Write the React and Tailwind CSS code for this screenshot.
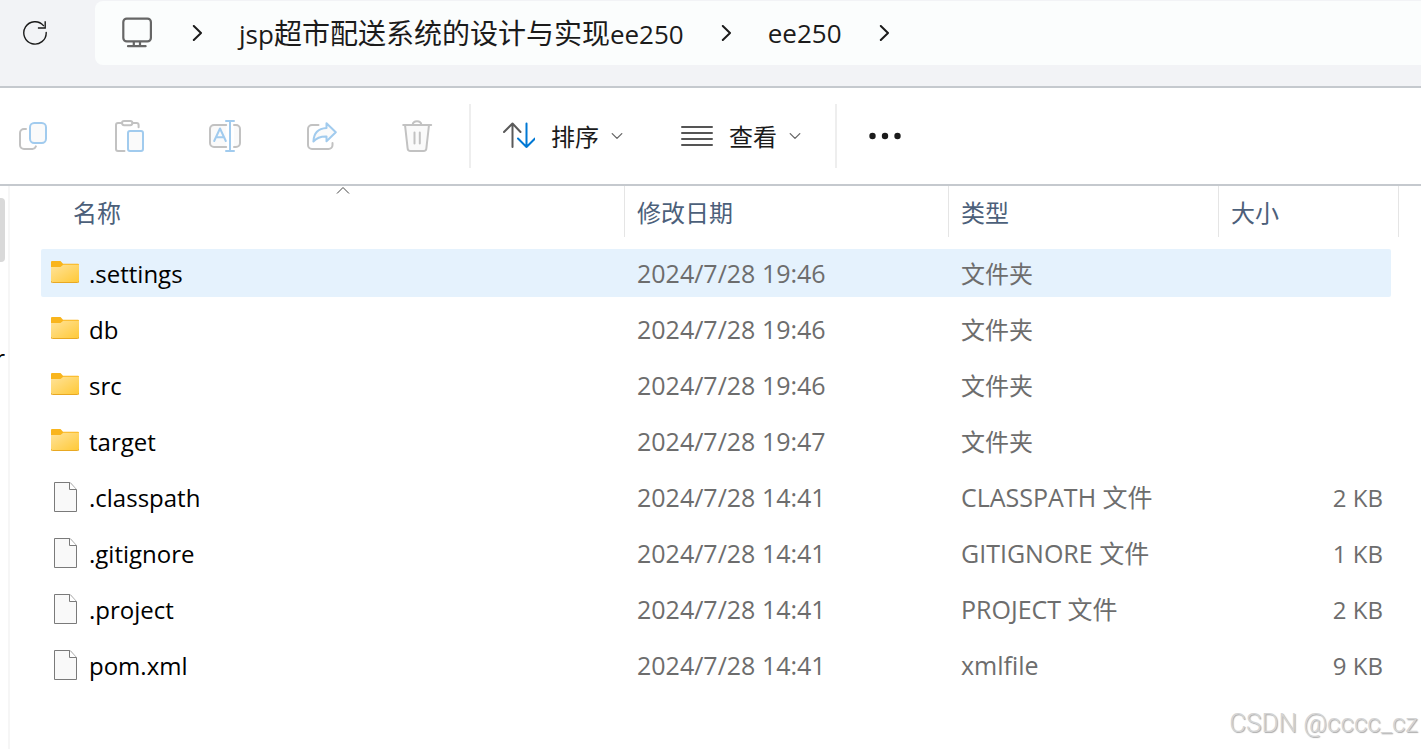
import { useState } from 'react';
import clsx from 'clsx';

const files = [
  { name: '.settings', date: '2024/7/28 19:46', type: '文件夹', folder: true },
  { name: 'db', date: '2024/7/28 19:46', type: '文件夹', folder: true },
  { name: 'src', date: '2024/7/28 19:46', type: '文件夹', folder: true },
  { name: 'target', date: '2024/7/28 19:47', type: '文件夹', folder: true },
  { name: '.classpath', date: '2024/7/28 14:41', type: 'CLASSPATH 文件', size: '2 KB' },
  { name: '.gitignore', date: '2024/7/28 14:41', type: 'GITIGNORE 文件', size: '1 KB' },
  { name: '.project', date: '2024/7/28 14:41', type: 'PROJECT 文件', size: '2 KB' },
  { name: 'pom.xml', date: '2024/7/28 14:41', type: 'xmlfile', size: '9 KB' },
];

const columns = 'grid grid-cols-[584px_324px_270px_1fr]';

function Icon({ size = 32, width = 2, children, className }) {
  return (
    <svg
      width={size}
      height={size}
      viewBox={`0 0 ${size} ${size}`}
      fill="none"
      strokeWidth={width}
      strokeLinecap="round"
      strokeLinejoin="round"
      className={clsx('block shrink-0', className)}
      aria-hidden="true"
    >
      {children}
    </svg>
  );
}

function RefreshIcon() {
  return (
    <Icon size={24} width={1.4} className="stroke-[#1b1b1b]">
      <path d="M20.500 4.600A11.200 11.200 0 1 0 23.200 11.500" />
      <path d="M22.200 1v6h-6.600" strokeLinecap="square" strokeLinejoin="miter" />
    </Icon>
  );
}

function MonitorIcon() {
  return (
    <Icon width={2.2} className="mr-0.5 stroke-[#666]">
      <rect x="2.300" y="1.600" width="27.600" height="22.800" rx="3.500" />
      <path d="M7 29.200h17.600M12.800 25v4M19 25v4" />
    </Icon>
  );
}

function PathChevron() {
  return (
    <Icon size={16} className="stroke-[#1b1b1b]">
      <path d="M4.800 1l7.200 7-7.200 7" />
    </Icon>
  );
}

function DownChevron() {
  return (
    <Icon size={12} width={1.3} className="stroke-[#666]">
      <path d="M1.200 3.600L6 8.400l4.800-4.800" />
    </Icon>
  );
}

function CopyIcon() {
  return (
    <Icon>
      <path d="M9 9H7a4 4 0 0 0-4 4v12a4 4 0 0 0 4 4h8.500a4 4 0 0 0 3.400-2.600" stroke="#c2c2c2" />
      <rect x="13" y="3" width="16" height="20" rx="4.200" stroke="#a1cbee" fill="#fafafa" />
    </Icon>
  );
}

function PasteIcon() {
  return (
    <Icon>
      <path d="M8.600 3H5a2 2 0 0 0-2 2v24a2 2 0 0 0 2 2h6.500" stroke="#c2c2c2" />
      <path d="M19.500 3h4.100a2 2 0 0 1 2 2v2.200" stroke="#c2c2c2" />
      <rect x="9" y="1" width="10.400" height="4.200" rx="2.100" stroke="#c2c2c2" />
      <rect x="15" y="11" width="15" height="20" rx="2" stroke="#a1cbee" fill="#fafafa" />
    </Icon>
  );
}

function RenameIcon() {
  return (
    <Icon>
      <path d="M17.200 5H5a4 4 0 0 0-4 4v14a4 4 0 0 0 4 4h12.200" stroke="#c2c2c2" fill="#fafafa" />
      <path d="M25 5h2a4 4 0 0 1 4 4v14a4 4 0 0 1-4 4h-2" stroke="#c2c2c2" fill="#fafafa" />
      <path d="M5.200 21L11 8.500 16.800 21M7.200 17.200h7.600" stroke="#a1cbee" />
      <path d="M17 1h8M21 1v30M17 31h8" stroke="#a1cbee" />
    </Icon>
  );
}

function ShareIcon() {
  return (
    <Icon>
      <path d="M13.500 5H7a4 4 0 0 0-4 4v16a4 4 0 0 0 4 4h16.500a4 4 0 0 0 4-4v-2" stroke="#c2c2c2" />
      <path
        d="M21.500 3.200l9.300 9-9.300 9V16.500C15.500 16.300 11.500 18 8.400 21.500c.3-7.500 4.500-13 13.100-13.500z"
        stroke="#a1cbee"
        fill="#fafafa"
      />
    </Icon>
  );
}

function TrashIcon() {
  return (
    <Icon className="stroke-[#c2c2c2]">
      <path d="M4 5l2.600 23.200a3 3 0 0 0 3 2.800h12.800a3 3 0 0 0 3-2.800L28 5z" fill="#fafafa" />
      <path d="M2.200 5h28M11.600 5c.5-5 8.300-5 8.800 0M13.500 12.500v11M18.800 12.500v11" />
    </Icon>
  );
}

function SortIcon() {
  return (
    <Icon>
      <path d="M9.500 27V3.500M1 12l8.500-8.500L17.500 12" stroke="#5a5a5a" />
      <path d="M23.500 3.500V27M15 18.500l8.500 8.500 8.500-8.500" stroke="#0078d4" />
    </Icon>
  );
}

function ListIcon() {
  return (
    <Icon className="stroke-[#555]">
      <path d="M1 7h30M1 13h30M1 19h30M1 25h30" />
    </Icon>
  );
}

function MoreIcon() {
  return (
    <Icon className="fill-[#1b1b1b]">
      <circle cx="3.500" cy="16" r="3.200" />
      <circle cx="16" cy="16" r="3.200" />
      <circle cx="28.500" cy="16" r="3.200" />
    </Icon>
  );
}

function FolderIcon() {
  return (
    <svg width="28" height="24" viewBox="0 1 28 24" className="block shrink-0" aria-hidden="true">
      <defs>
        <linearGradient id="folder" x1="0" y1="0" x2="1" y2="1">
          <stop offset="0" stopColor="#ffe39a" />
          <stop offset="1" stopColor="#ffc937" />
        </linearGradient>
      </defs>
      <path d="M0 2a1 1 0 0 1 1-1h8.500l2.500 2.800h15a1 1 0 0 1 1 1V22H0z" fill="#f9b51c" />
      <path d="M0 7h9.500l2.800-2.200H28V21.200a1 1 0 0 1-1 1H1a1 1 0 0 1-1-1z" fill="url(#folder)" />
      <path d="M0 21.200a1.300 1.300 0 0 0 1.300 1.300h25.400a1.300 1.300 0 0 0 1.300-1.300" stroke="#e8a822" fill="none" />
    </svg>
  );
}

function FileIcon() {
  return (
    <svg width="28" height="32" viewBox="0 0 28 32" className="block shrink-0" aria-hidden="true">
      <path d="M3.500 1.500H19l6.500 7v22h-22z" fill="#f9f9f9" stroke="#7a7a7a" />
      <path d="M18.500 1.500v7h7" fill="#fff" stroke="#7a7a7a" />
    </svg>
  );
}

function AddressBar() {
  return (
    <header className="flex border-b-2 border-[#c5c9ce] bg-[#f2f3f6] pt-px pb-[21px]">
      <div className="flex w-[95px] shrink-0 items-center pl-[23px]">
        <button type="button" aria-label="刷新">
          <RefreshIcon />
        </button>
      </div>
      <nav className="flex h-16 flex-1 items-center gap-[34px] rounded-l-lg bg-[#fbfdfd] pl-[26px] text-[26px] text-[#1b1b1b]">
        <MonitorIcon />
        <PathChevron />
        <a href="#parent" className="whitespace-nowrap">
          jsp<span className="text-[28px]">超市配送系统的设计与实现</span>ee250
        </a>
        <PathChevron />
        <a href="#current">ee250</a>
        <PathChevron />
      </nav>
    </header>
  );
}

function Divider({ className }) {
  return <div className={clsx('h-16 w-0.5 shrink-0 bg-[#eee]', className)} />;
}

function Toolbar() {
  return (
    <div className="flex h-[98px] items-center border-b-2 border-[#c5c9ce] pl-[17px] text-2xl text-[#1b1b1b]">
      <div className="flex gap-16">
        <button type="button" aria-label="复制"><CopyIcon /></button>
        <button type="button" aria-label="粘贴"><PasteIcon /></button>
        <button type="button" aria-label="重命名"><RenameIcon /></button>
        <button type="button" aria-label="共享"><ShareIcon /></button>
        <button type="button" aria-label="删除"><TrashIcon /></button>
      </div>
      <Divider className="mr-8 ml-9" />
      <button type="button" className="flex items-center whitespace-nowrap">
        <SortIcon />
        <span className="mr-3 ml-4 pt-0.5">排序</span>
        <DownChevron />
      </button>
      <button type="button" className="ml-[58px] flex items-center whitespace-nowrap">
        <ListIcon />
        <span className="mr-3 ml-4 pt-0.5">查看</span>
        <DownChevron />
      </button>
      <Divider className="mr-8 ml-[34px]" />
      <button type="button" aria-label="更多"><MoreIcon /></button>
    </div>
  );
}

// The navigation pane is almost fully scrolled out, only its edge is left
function SidePane() {
  return (
    <aside className="w-[10px] shrink-0 border-r-2 border-[#f6f6f6] pt-3">
      <div className="h-16 w-[5px] rounded-r-sm bg-[#d9d9d9]" />
      <div className="mt-20 flex w-[5px] justify-end overflow-hidden text-2xl">r</div>
    </aside>
  );
}

function FileTable() {
  const [selected, setSelected] = useState('.settings');

  return (
    <table className="mr-[22px] ml-[31px] block flex-1 text-2xl text-[#6d6d6d]">
      <thead className="block text-[#4c607a]">
        <tr className={columns}>
          <th className="relative flex h-[51px] items-center border-r border-[#e5e5e5] pt-0.5 pl-8 font-normal">
            名称
            <svg
              width="14"
              height="8"
              viewBox="0 0 14 8"
              className="absolute top-0 right-0 left-5 mx-auto fill-none stroke-[#444]"
              aria-hidden="true"
            >
              <path d="M1 7.500l6-6 6 6" />
            </svg>
          </th>
          <th className="flex items-center border-r border-[#e5e5e5] pt-0.5 pl-3 font-normal">修改日期</th>
          <th className="flex items-center border-r border-[#e5e5e5] pt-0.5 pl-3 font-normal">类型</th>
          <th className="flex items-center border-r border-[#e5e5e5] pt-0.5 pl-3 font-normal">大小</th>
        </tr>
      </thead>
      <tbody className="mt-3 mr-2 flex flex-col gap-2">
        {files.map((file) => (
          <tr
            key={file.name}
            onClick={() => setSelected(file.name)}
            className={clsx(columns, 'h-12 items-center rounded-xs', file.name === selected && 'bg-[#e5f2fd]')}
          >
            <td className="flex items-center gap-[10px] pl-[10px] text-black">
              {file.folder ? <FolderIcon /> : <FileIcon />}
              <span className="pt-0.5">{file.name}</span>
            </td>
            <td className="pt-0.5 pl-3 text-[25px]">{file.date}</td>
            <td className={clsx('pt-0.5 pl-3', !file.folder && 'text-[25px]')}>{file.type}</td>
            <td className="pt-0.5 pr-2 text-right">{file.size}</td>
          </tr>
        ))}
      </tbody>
    </table>
  );
}

export default function App() {
  return (
    <div className="relative flex min-h-screen flex-col overflow-hidden bg-white font-['Open_Sans','Noto_Sans_CJK_SC',sans-serif]">
      <AddressBar />
      <Toolbar />
      <main className="flex flex-1">
        <SidePane />
        <FileTable />
      </main>
      <div className="absolute right-[3px] bottom-[6px] font-['Roboto',sans-serif] text-[26px] font-light text-[#d4d4d4] [text-shadow:1px_1px_1px_#a8a8a8]">
        CSDN @cccc_cz
      </div>
    </div>
  );
}
